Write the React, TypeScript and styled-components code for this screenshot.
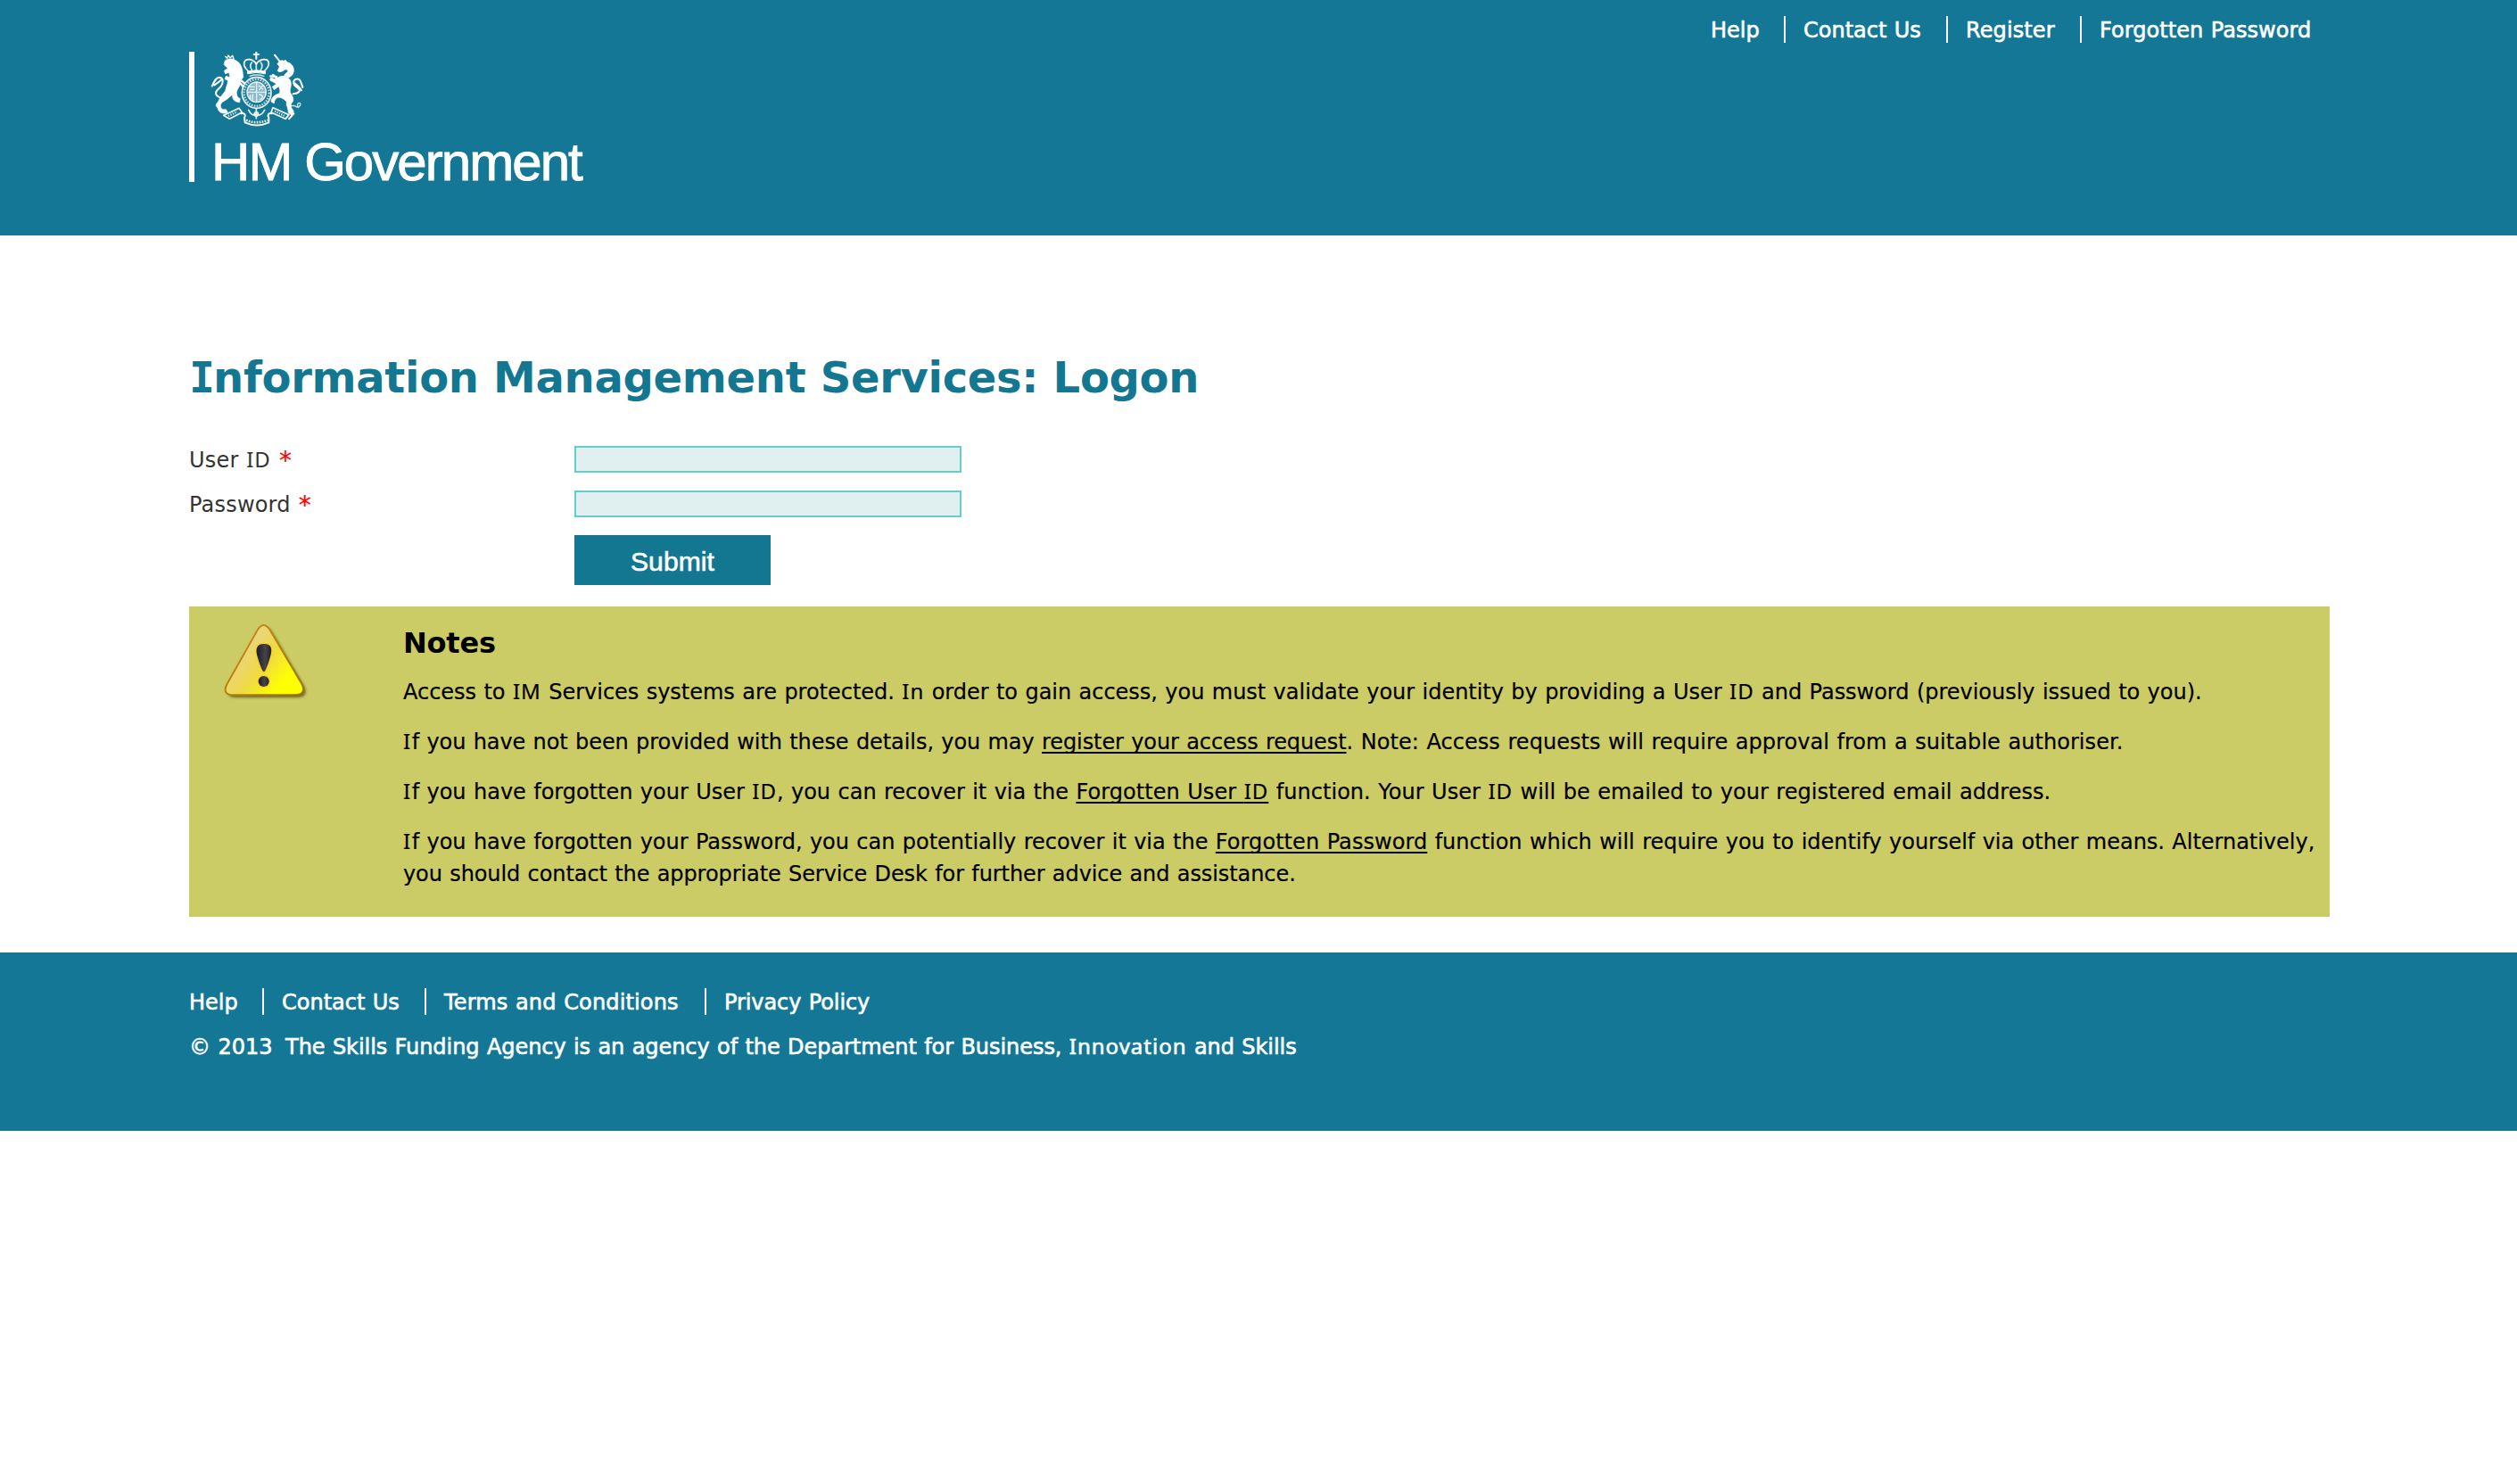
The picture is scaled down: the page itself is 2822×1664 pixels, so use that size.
import React from "react";
import styled, { createGlobalStyle } from "styled-components";

const TEAL = "#147796";
const SANS = `"DejaVu Sans", Verdana, sans-serif`;
const SERIFED_I = `"Noto Sans", "DejaVu Sans", sans-serif`;

const GlobalStyle = createGlobalStyle`
  * { box-sizing: border-box; }
  body {
    margin: 0;
    background: #fff;
    color: #000;
    font-family: ${SANS};
    font-size: 24px;
    word-spacing: 0.8px;
  }
`;

const Page = styled.div`
  display: flex;
  flex-direction: column;
  min-height: 1664px;
`;

const Header = styled.header`
  display: flex;
  flex-direction: column;
  gap: 10px;
  height: 264px;
  padding: 18px 210px 0 212px;
  background: ${TEAL};
`;

const LinkBar = styled.ul<{ $end?: boolean }>`
  display: flex;
  justify-content: ${(p) => (p.$end ? "flex-end" : "flex-start")};
  height: 30px;
  margin: 0;
  padding: 0;
  list-style: none;
`;

const LinkItem = styled.li<{ $width: number }>`
  width: ${(p) => p.$width}px;
  height: 30px;
  padding-left: 20px;
  border-right: 2px solid #fff;
  white-space: nowrap;
  &:first-child { padding-left: 0; }
  &:last-child { border-right: 0; }
`;

const BarLink = styled.a<{ $tracking?: number }>`
  display: block;
  color: #fff;
  line-height: 32px;
  letter-spacing: ${(p) => p.$tracking ?? 0}px;
  text-decoration: none;
  -webkit-text-stroke: 0.6px #fff;
`;

const Logo = styled.div`
  display: flex;
  width: 446px;
  height: 145.5px;
  padding-left: 18px;
  border-left: 6px solid #fff;
`;

const LogoStack = styled.div`
  display: flex;
  flex-direction: column;
`;

const LogoText = styled.span`
  padding-left: 1px;
  color: #fff;
  font: 60px/42px "Liberation Sans", Arial, sans-serif;
  letter-spacing: -1.95px;
  word-spacing: 0;
  white-space: nowrap;
  -webkit-text-stroke: 0.9px #fff;
`;

const Main = styled.main`
  display: flex;
  flex-direction: column;
  padding: 130px 210px 40px 212px;
`;

const Title = styled.h1`
  margin: 0 0 48px;
  color: #147791;
  font-size: 48px;
  line-height: 58px;
  letter-spacing: -0.31px;
  word-spacing: 0;
  white-space: nowrap;
  &::first-letter {
    font-family: "DejaVu Sans Mono", monospace;
    letter-spacing: -1.8px;
    line-height: 0;
  }
`;

const Form = styled.form`
  display: flex;
  flex-direction: column;
  gap: 20px;
  margin-bottom: 24px;
`;

const Field = styled.div`
  display: grid;
  grid-template-columns: 432px auto;
  justify-content: start;
`;

const Label = styled.label`
  height: 30px;
  color: #333;
  line-height: 32px;
  letter-spacing: 0.2px;
  white-space: nowrap;
`;

const Required = styled.span`
  margin-left: 0.5px;
  color: #f00;
  font-size: 28px;
  line-height: 0;
  vertical-align: -2px;
  -webkit-text-stroke: 0.2px #f00;
`;

const Input = styled.input`
  width: 434px;
  height: 30px;
  padding: 0 4px;
  border: 2px solid #66cccc;
  border-radius: 0;
  outline: 0;
  background: #e0f0f0;
`;

const Submit = styled.button`
  grid-column: 2;
  width: 220px;
  height: 56px;
  padding: 3px 0 0;
  border: 0;
  background: #147791;
  color: #fff;
  font: 30px "Liberation Sans", Arial, sans-serif;
  letter-spacing: 0.1px;
  -webkit-text-stroke: 0.6px #fff;
`;

const NotesPanel = styled.section`
  display: grid;
  grid-template-columns: 240px 1fr;
  height: 348px;
  background: #cccc66;
`;

const IconCell = styled.div`
  padding: 12px 0 0 32px;
`;

const NotesBody = styled.div`
  display: flex;
  flex-direction: column;
  gap: 20px;
  padding-top: 17px;
`;

const NotesTitle = styled.h2`
  margin: 0 0 -7px;
  font-size: 32px;
  line-height: 48px;
  letter-spacing: -0.2px;
`;

const Note = styled.p<{ $initialI?: boolean }>`
  margin: 0;
  line-height: 36px;
  white-space: nowrap;
  -webkit-text-stroke: 0.2px #000;
  &::first-letter {
    ${(p) => (p.$initialI ? `font-family: ${SERIFED_I}; letter-spacing: 1.5px; line-height: 0;` : "")}
  }
`;

const Run = styled.span<{ $tracking: number }>`
  letter-spacing: ${(p) => p.$tracking}px;
`;

const NoteLink = styled.a<{ $tracking: number }>`
  color: #000;
  letter-spacing: ${(p) => p.$tracking}px;
  text-decoration: underline;
  text-decoration-thickness: 2px;
  text-underline-offset: 3px;
  text-decoration-skip-ink: none;
`;

/* Capital I carries serifs in these words. */
const Word = styled.span`
  font-family: ${SERIFED_I};
  letter-spacing: 1px;
  line-height: 0;
`;

const Footer = styled.footer`
  display: flex;
  flex-direction: column;
  gap: 20px;
  height: 200px;
  padding: 40px 210px 0 212px;
  background: ${TEAL};
`;

const Copyright = styled.p`
  display: flex;
  gap: 14.5px;
  margin: 0;
  color: #fff;
  line-height: 32px;
  white-space: nowrap;
  -webkit-text-stroke: 0.6px #fff;
`;

const Crest = () => (
  <svg width="108" height="103" viewBox="108 54 324 309" fill="none" stroke="#fff" strokeLinecap="round" strokeLinejoin="round">
    {/* crown */}
    <path d="M262 54V78M254 63H270" strokeWidth="6" />
    <path d="M234 118C212 98 220 78 240 80C252 82 258 88 262 96C266 88 274 82 286 80C306 78 312 98 290 118" strokeWidth="5" />
    <path d="M247 116C240 104 241 97 247 90M277 116C284 104 283 97 277 90M262 92V116" strokeWidth="5" opacity=".85" />
    <path d="M234 120Q262 112 292 120V128Q262 120 234 128Z" fill="#fff" strokeWidth="3" />
    <path d="M240 136Q262 128 288 136" strokeWidth="4" opacity=".8" />
    {/* garter and shield */}
    <ellipse cx="263" cy="192" rx="49" ry="52" strokeWidth="5" opacity=".9" />
    <ellipse cx="263" cy="192" rx="42" ry="45" strokeWidth="8" strokeDasharray="5 4" strokeLinecap="butt" opacity=".7" />
    <ellipse cx="263" cy="190" rx="32" ry="34" fill="#fff" fillOpacity=".5" strokeWidth="4" strokeOpacity=".9" />
    <path d="M263 158V222M233 190H293" strokeWidth="4" opacity=".75" />
    <path d="M240 172H256M242 181H254M270 168L284 180M284 168L272 182M242 200V212M250 198V216M272 198C286 198 286 214 274 214" strokeWidth="4" opacity=".8" />
    {/* lion */}
    <path d="M158 70L164 76L168 66L174 75L182 67L186 78" strokeWidth="4" />
    <path d="M157 84C166 76 182 76 190 82C206 88 214 104 216 122L218 140L208 152C212 168 198 176 196 190C194 202 200 208 208 212L206 224C190 224 180 214 182 198C172 206 166 212 160 216C150 222 142 226 142 236C142 246 150 250 160 248L166 258C150 266 134 258 132 242C124 238 126 228 134 222C140 206 150 196 158 186C160 172 168 160 166 150L156 146L160 136L174 140L170 124L158 128L154 118L166 110L160 104L154 98Z" fill="#fff" strokeWidth="2" />
    <path d="M206 146L222 160M208 160L218 172" strokeWidth="7" />
    <path d="M140 208C120 200 124 188 136 178C152 164 154 142 138 140C126 140 120 156 113 170M121 166C130 160 138 156 144 148" strokeWidth="6" />
    {/* unicorn */}
    <path d="M324 65L348 96" strokeWidth="6" />
    <path d="M334 94C342 82 350 82 354 86L360 82L366 90C382 92 390 108 387 122C384 136 370 144 360 140C352 138 358 128 366 124C372 118 366 112 358 114C348 122 338 124 334 118L340 106Z" fill="#fff" strokeWidth="3" />
    <path d="M340 138C352 132 374 140 378 154C382 170 374 178 376 190C380 200 388 206 386 218C384 226 376 226 380 242L388 254L382 268L370 260C370 244 362 234 364 222C354 212 344 206 334 208C326 212 322 220 322 228L312 222C314 208 322 200 336 196C346 192 340 180 338 170L322 182L316 172L330 162L308 150L310 140L324 146Z" fill="#fff" strokeWidth="2" />
    <path d="M334 146L318 132M330 138L310 136" strokeWidth="7" />
    <path d="M386 196C404 194 414 186 402 176C386 166 382 152 396 146C410 142 412 156 418 174M392 160C400 168 410 174 414 184" strokeWidth="6" />
    <path d="M364 232C372 244 388 228 398 240C410 240 414 232 408 226C400 226 398 236 404 242" strokeWidth="4" opacity=".8" />
    {/* motto ribbon and base */}
    <path d="M152 268L204 244L214 258L172 280Z" strokeWidth="5" opacity=".95" />
    <path d="M168 270L198 256" strokeWidth="7" strokeDasharray="4 4" strokeLinecap="butt" opacity=".8" />
    <path d="M318 242L372 266L360 280L312 258Z" strokeWidth="5" opacity=".95" />
    <path d="M324 254L358 270" strokeWidth="7" strokeDasharray="4 4" strokeLinecap="butt" opacity=".8" />
    <path d="M372 280L388 262" strokeWidth="6" />
    <path d="M212 262C222 258 228 268 222 276L224 292C250 304 278 304 304 292L304 276C298 268 304 258 314 262" strokeWidth="6" />
    <path d="M228 284C252 294 276 294 300 284" strokeWidth="8" strokeDasharray="5 4" strokeLinecap="butt" opacity=".9" />
    <path d="M236 250C244 266 252 272 262 262C272 272 282 266 290 250M262 246V278" strokeWidth="5" opacity=".9" />
    <circle cx="262" cy="264" r="7" strokeWidth="4" />
  </svg>
);

const WarningIcon = () => (
  <svg width="110" height="100" viewBox="0 0 330 300">
    <defs>
      <linearGradient id="face" x1="60" y1="110" x2="240" y2="250" gradientUnits="userSpaceOnUse">
        <stop offset="0" stopColor="#e8d490" />
        <stop offset=".45" stopColor="#efd945" />
        <stop offset=".85" stopColor="#ffff00" />
      </linearGradient>
      <linearGradient id="rim" x1="0" y1="0" x2="1" y2="1">
        <stop offset="0" stopColor="#cf8f14" />
        <stop offset="1" stopColor="#9c7000" />
      </linearGradient>
      <linearGradient id="mark" x1="0" y1="0" x2="1" y2="0">
        <stop offset="0" stopColor="#1c1c2c" />
        <stop offset=".6" stopColor="#454548" />
        <stop offset="1" stopColor="#1c1c2c" />
      </linearGradient>
      <filter id="soft" x="-10%" y="-10%" width="125%" height="125%">
        <feGaussianBlur stdDeviation="4" />
      </filter>
    </defs>
    <path d="M136 40Q155 14 174 40L284 226Q298 260 262 262H50Q16 260 30 228Z" transform="translate(8 8)" fill="#4e4e14" opacity=".8" filter="url(#soft)" />
    <path d="M136 40Q155 14 174 40L284 226Q298 260 262 262H50Q16 260 30 228Z" fill="url(#face)" stroke="url(#rim)" strokeWidth="6" />
    <g fill="url(#mark)" stroke="#ffcf1c" strokeWidth="8" paintOrder="stroke">
      <path d="M156 90C180 89 185 106 178 130C173 150 166 168 160 180Q156 187 151 180C145 168 138 150 133 130C127 106 132 89 156 90Z" />
      <circle cx="155" cy="216" r="18" />
    </g>
  </svg>
);

interface BarEntry {
  label: string;
  width: number;
  tracking?: number;
}

const headerLinks: BarEntry[] = [
  { label: "Help", width: 84 },
  { label: "Contact Us", width: 182 },
  { label: "Register", width: 150, tracking: 0.1 },
  { label: "Forgotten Password", width: 278, tracking: 0.05 },
];

const footerLinks: BarEntry[] = [
  { label: "Help", width: 84 },
  { label: "Contact Us", width: 182 },
  { label: "Terms and Conditions", width: 314, tracking: 0.15 },
  { label: "Privacy Policy", width: 200, tracking: -0.08 },
];

const Links = ({ items, end }: { items: BarEntry[]; end?: boolean }) => (
  <LinkBar $end={end}>
    {items.map((item) => (
      <LinkItem key={item.label} $width={item.width}>
        <BarLink $tracking={item.tracking}>{item.label}</BarLink>
      </LinkItem>
    ))}
  </LinkBar>
);

export default function App() {
  return (
    <Page>
      <GlobalStyle />
      <Header>
        <Links items={headerLinks} end />
        <Logo>
          <LogoStack>
            <Crest />
            <LogoText>HM Government</LogoText>
          </LogoStack>
        </Logo>
      </Header>

      <Main>
        <Title>Information Management Services: Logon</Title>
        <Form>
          <Field>
            <Label htmlFor="user">
              User <Word>ID</Word> <Required>*</Required>
            </Label>
            <Input id="user" type="text" />
          </Field>
          <Field>
            <Label htmlFor="password">
              Password <Required>*</Required>
            </Label>
            <Input id="password" type="password" />
          </Field>
          <Field>
            <Submit type="button">Submit</Submit>
          </Field>
        </Form>

        <NotesPanel>
          <IconCell>
            <WarningIcon />
          </IconCell>
          <NotesBody>
            <NotesTitle>Notes</NotesTitle>
            <Note>
              <Run $tracking={-0.02}>
                Access to <Word>IM</Word> Services systems are protected. <Word>In</Word> order to gain access, you must
                validate your identity by providing a User <Word>ID</Word> and Password (previously issued to you).
              </Run>
            </Note>
            <Note $initialI>
              <Run $tracking={-0.07}>If you have not been provided with these details, you may </Run>
              <NoteLink $tracking={-0.085}>register your access request</NoteLink>
              <Run $tracking={0.06}>. Note: Access requests will require approval from a suitable authoriser.</Run>
            </Note>
            <Note $initialI>
              <Run $tracking={-0.01}>
                If you have forgotten your User <Word>ID</Word>, you can recover it via the{" "}
              </Run>
              <NoteLink $tracking={0.06}>
                Forgotten User <Word>ID</Word>
              </NoteLink>
              <Run $tracking={0.035}>
                {" "}
                function. Your User <Word>ID</Word> will be emailed to your registered email address.
              </Run>
            </Note>
            <Note $initialI>
              <Run $tracking={-0.02}>If you have forgotten your Password, you can potentially recover it via the </Run>
              <NoteLink $tracking={0.06}>Forgotten Password</NoteLink>
              <Run $tracking={-0.02}>
                {" "}
                function which will require you to identify yourself via other means. Alternatively,
              </Run>
              <br />
              <Run $tracking={-0.08}>
                you should contact the appropriate Service Desk for further advice and assistance.
              </Run>
            </Note>
          </NotesBody>
        </NotesPanel>
      </Main>

      <Footer>
        <Links items={footerLinks} />
        <Copyright>
          <span>© 2013</span>
          <Run $tracking={-0.05}>
            The Skills Funding Agency is an agency of the Department for Business, <Word>Innovation</Word> and Skills
          </Run>
        </Copyright>
      </Footer>
    </Page>
  );
}
